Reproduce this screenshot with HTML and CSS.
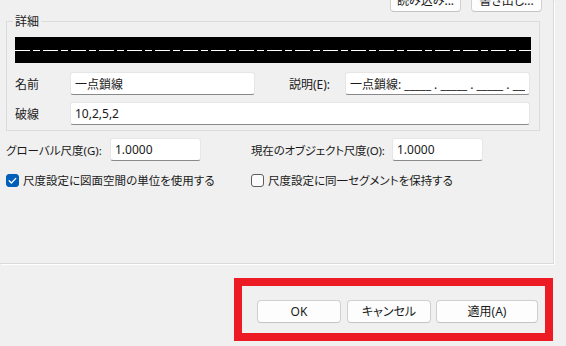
FILE: index.html
```html
<!DOCTYPE html>
<html lang="ja">
<head>
  <meta charset="UTF-8">
  <title>線種</title>
  <link rel="stylesheet" href="styles.css">
</head>
<body>
  <div class="page">
    <div class="file-buttons">
      <button class="btn">読み込み...</button>
      <button class="btn">書き出し...</button>
    </div>

    <fieldset class="details">
      <legend>詳細</legend>
      <div class="preview"><div class="preview-line"></div></div>
      <div class="row">
        <label class="lbl">名前</label>
        <input class="field name-field" type="text" value="一点鎖線" readonly>
        <label class="lbl desc-lbl">説明(E):</label>
        <input class="field desc-field" type="text" value="一点鎖線: _____ . _____ . _____ . _____ ." readonly>
      </div>
      <div class="row row-dash">
        <label class="lbl">破線</label>
        <input class="field dash-field" type="text" value="10,2,5,2" readonly>
      </div>
    </fieldset>

    <div class="scale-row">
      <div class="item">
        <label class="scale-lbl">グローバル尺度(G):</label>
        <input class="field scale-field" type="text" value="1.0000" readonly>
      </div>
      <div class="item">
        <label class="scale-lbl obj-lbl">現在のオブジェクト尺度(O):</label>
        <input class="field scale-field" type="text" value="1.0000" readonly>
      </div>
    </div>

    <div class="check-row">
      <div class="item">
        <span class="check on">
          <svg width="13" height="13" viewBox="0 0 13 13"><path d="M3.2 6.8 L5.4 9 L9.8 4.4" fill="none" stroke="#fff" stroke-width="1.3" stroke-linecap="round" stroke-linejoin="round"/></svg>
        </span>
        <span>尺度設定に図面空間の単位を使用する</span>
      </div>
      <div class="item">
        <span class="check"></span>
        <span>尺度設定に同一セグメントを保持する</span>
      </div>
    </div>
  </div>

  <div class="footer">
    <div class="highlight">
      <button class="btn ok">OK</button>
      <button class="btn cancel">キャンセル</button>
      <button class="btn apply">適用(A)</button>
    </div>
  </div>
</body>
</html>
```

FILE: styles.css
```css
/* ダイアログ */
body {
  margin: 0;
  width: 566px;
  height: 346px;
  overflow: hidden;
  background: #f0f0f0;
  font-family: "Noto Sans", "Noto Sans CJK JP", sans-serif;
  font-feature-settings: "palt";
  font-size: 11.5px;
  color: #1a1a1a;
}

.page {
  display: flow-root;
  width: 553px;
  height: 263px;
  border-right: 1px solid #dadada;
  border-bottom: 1px solid #dadada;
  box-shadow: 1px 1px 0 #fff;
}

.btn {
  font: inherit;
  font-size: 12px;
  color: #1a1a1a;
  background: #fdfdfd;
  border: 1px solid #d0d0d0;
  border-bottom-color: #c4c4c4;
  border-radius: 4px;
  height: 23px;
  padding: 0;
  line-height: 20px;
}

.file-buttons {
  display: flex;
  justify-content: flex-end;
  gap: 10px;
  margin-top: -11px;
  padding-right: 11px;
}

.file-buttons .btn {
  width: 71px;
}

.details {
  margin: 2px 13px 0 6px;
  padding: 8px 8px 5px 8px;
  border: 1px solid #dcdcdc;
  min-width: 0;
}

.details legend {
  padding: 0 2px;
  margin-left: -2px;
  line-height: 15px;
  font-size: 12px;
}

.preview {
  height: 26px;
  background: #000;
  display: flex;
  align-items: center;
}

.preview-line {
  width: 100%;
  height: 1px;
  background: repeating-linear-gradient(to right, #fff 0 15px, transparent 15px 18px, #fff 18px 25px, transparent 25px 28px);
}

.row {
  display: flex;
  align-items: center;
  margin-top: 9px;
}

.row-dash {
  margin-top: 7px;
}

.lbl {
  width: 55px;
  flex: none;
  font-size: 12px;
}

.desc-lbl {
  width: 56px;
  margin-left: 34px;
}

.field {
  font: inherit;
  font-size: 12px;
  color: #1a1a1a;
  box-sizing: border-box;
  height: 23px;
  padding: 0 4px;
  background: #fff;
  border: 1px solid #e6e6e6;
  border-bottom-color: #8a8a8a;
  border-radius: 3px;
  outline: none;
}

.name-field,
.desc-field {
  width: 185px;
}

.dash-field {
  width: 460px;
}

.scale-row,
.check-row {
  display: flex;
  padding-left: 6px;
  white-space: nowrap;
}

.scale-row {
  margin-top: 7px;
}

.check-row {
  margin-top: 11px;
}

.item {
  display: flex;
  align-items: center;
  width: 245px;
}

.scale-lbl {
  width: 104px;
  flex: none;
}

.obj-lbl {
  width: 141px;
  letter-spacing: -0.2px;
}

.scale-field {
  width: 91px;
}

.check {
  width: 13px;
  height: 13px;
  box-sizing: border-box;
  border: 1px solid #5e5e5e;
  border-radius: 3px;
  background: #fbfbfb;
  margin-right: 4px;
  flex: none;
  display: flex;
}

.check.on {
  background: #005fb8;
  border-color: #005fb8;
}

.check svg {
  margin: -1px;
}

.footer {
  display: flex;
  justify-content: flex-end;
  padding: 14px 13px 0 0;
}

.highlight {
  display: flex;
  gap: 6px;
  border: 8px solid #ed1c24;
  padding: 14px 7px 10px 15px;
}

.ok,
.cancel {
  width: 84px;
}

.apply {
  width: 102px;
  margin-left: -1px;
}
```
